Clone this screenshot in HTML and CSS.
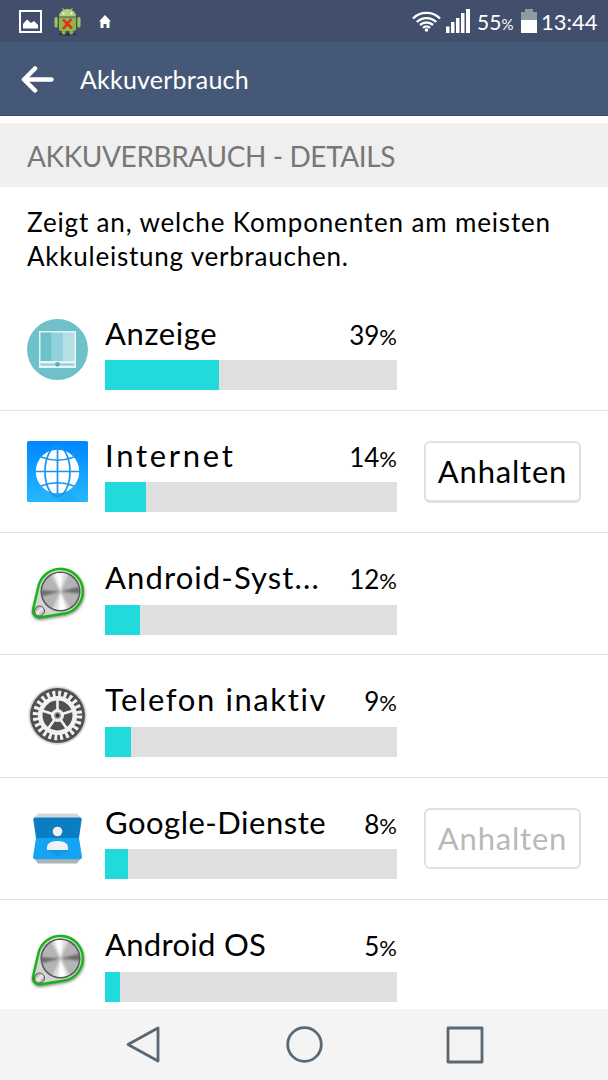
FILE: index.html
```html
<!DOCTYPE html>
<html lang="de">
<head>
  <meta charset="UTF-8" />
  <meta name="viewport" content="width=device-width, initial-scale=1" />
  <title>Akkuverbrauch</title>
  <link rel="stylesheet" href="styles.css">
</head>
<body>
  <!-- Shared shapes -->
  <svg class="defs" width="0" height="0" aria-hidden="true">
    <defs>
      <linearGradient id="sky" x1="0" y1="0" x2="0" y2="1">
        <stop offset="0" stop-color="#0086ff" />
        <stop offset="1" stop-color="#26b8ff" />
      </linearGradient>
      <linearGradient id="metal" x1="0" y1="0" x2="1" y2="1">
        <stop offset="0" stop-color="#777" />
        <stop offset="0.5" stop-color="#eee" />
        <stop offset="1" stop-color="#888" />
      </linearGradient>
      <filter id="soft" x="-30%" y="-30%" width="160%" height="160%">
        <feGaussianBlur stdDeviation="1.6" />
      </filter>
      <filter id="shine" x="-30%" y="-30%" width="160%" height="160%">
        <feGaussianBlur stdDeviation="1.1" />
      </filter>
      <clipPath id="disc"><circle cx="33.5" cy="28.5" r="18.5" /></clipPath>
      <symbol id="knob" viewBox="0 0 61 61">
        <path d="M6 48 L12 25 A22.5 22.5 0 1 1 38 52 L14 56 A7 7 0 0 1 6 48z" fill="#333" stroke="#333" stroke-width="2" opacity="0.6" filter="url(#soft)" />
        <path d="M6.100 46.500 L11.500 23 A22.500 22.500 0 1 1 37.500 50.500 L13.800 54.300 A6.500 6.500 0 0 1 6.100 46.500z" fill="#d4d4d4" stroke="#12b812" stroke-width="2.400" />
        <circle cx="33.5" cy="28.5" r="20" fill="#5a5a5a" />
        <circle cx="33.5" cy="28.5" r="18.500" fill="#b4b4b4" />
        <g clip-path="url(#disc)">
          <g filter="url(#shine)">
            <path d="M33.5 28.5 L22 8 H43z M33.5 28.5 L45 49 H24z" fill="#dcdcdc" />
            <path d="M33.5 28.5 L27 8 H36z M33.5 28.5 L40 49 H31z" fill="#fff" />
            <path d="M33.5 28.5 L12 27 V34z M33.5 28.5 L55 23 V31z" fill="#6c6c6c" />
          </g>
        </g>
        <circle cx="12.500" cy="48" r="5" fill="url(#metal)" stroke="#555" />
      </symbol>
    </defs>
  </svg>

  <div class="phone">
    <div class="status-bar">
      <div class="status-left">
        <svg width="23" height="23" viewBox="0 0 23 23">
          <rect x="1" y="1" width="21" height="21" fill="none" stroke="#fff" stroke-width="2" />
          <path d="M4 18.500 V14 L8 9.500 L12 13 L15 11 L19 15 V18.500z" fill="#fff" />
        </svg>
        <svg width="27" height="29" viewBox="0 0 27 29">
          <ellipse cx="13.500" cy="27.200" rx="9.500" ry="1.500" fill="#29334a" />
          <path d="M8.500 1 L10.500 4 M18.500 1 L16.500 4" stroke="#9ac04c" stroke-width="1.200" />
          <path d="M5 9.500 A8.500 7.500 0 0 1 22 9.500z" fill="#b2cf79" />
          <path d="M5 10.500 H22 V21.500 Q22 24 19.500 24 H7.500 Q5 24 5 21.500z" fill="#8eb844" />
          <rect x="0.500" y="10" width="3.200" height="10.500" rx="1.600" fill="#9cc35b" />
          <rect x="23.300" y="10" width="3.200" height="10.500" rx="1.600" fill="#9cc35b" />
          <rect x="8" y="23" width="3.500" height="4.500" rx="1.500" fill="#8eb844" />
          <rect x="15.500" y="23" width="3.500" height="4.500" rx="1.500" fill="#8eb844" />
          <circle cx="9.500" cy="6.500" r="1" fill="#fff" />
          <circle cx="17.500" cy="6.500" r="1" fill="#fff" />
          <path d="M9 12.500 L18 21.500 M17.500 12 L9 22" stroke="#e22e22" stroke-width="2.600" />
        </svg>
        <svg width="12" height="13" viewBox="0 0 12 13">
          <path d="M6 0 L12 6.500 H10.500 V13 H7.500 V9 H4.500 V13 H1.500 V6.500 H0z" fill="#fff" />
        </svg>
      </div>
      <div class="status-right">
        <svg class="wifi" width="29" height="21" viewBox="0 0 29 21">
          <g fill="none" stroke="#fff" stroke-width="2.400">
            <path d="M1 7.500 A19 19 0 0 1 28 7.500" />
            <path d="M4.800 11 A14 14 0 0 1 24.200 11" />
            <path d="M8 14 A9.500 9.500 0 0 1 21 14" />
            <path d="M11 17 A5 5 0 0 1 18 17" />
          </g>
          <circle cx="14.500" cy="19" r="1.800" fill="#fff" />
        </svg>
        <svg class="signal" width="24" height="24" viewBox="0 0 24 24" fill="#fff">
          <rect x="0" y="17.500" width="3.500" height="6.500" />
          <rect x="5" y="13" width="3.500" height="11" />
          <rect x="10" y="9" width="3.500" height="15" />
          <rect x="15" y="4" width="3.500" height="20" />
          <rect x="20" y="0" width="4" height="24" />
        </svg>
        <span class="charge">55<i>%</i></span>
        <svg class="battery" width="16" height="24" viewBox="0 0 16 24">
          <path d="M4 0 H12 V3 H16 V11 H0 V3 H4z" fill="#8d9ba3" />
          <rect y="11" width="16" height="13" fill="#fff" />
        </svg>
        <span class="clock">13:44</span>
      </div>
    </div>

    <header class="title-bar">
      <svg width="33" height="27" viewBox="0 0 33 27">
        <path d="M14 2.500 L3 13.500 L14 24.500 M3 13.500 H30.500" fill="none" stroke="#fff" stroke-width="4.500" stroke-linecap="round" stroke-linejoin="round" />
      </svg>
      <h1>Akkuverbrauch</h1>
    </header>

    <h2 class="section"><span>AKKUVERBRAUCH - DETAILS</span></h2>

    <main>
      <p class="intro">
        <span class="line-one">Zeigt an, welche Komponenten am meisten</span><br>
        <span class="line-two">Akkuleistung verbrauchen.</span>
      </p>

      <ul class="usage">
        <li>
          <svg class="icon" viewBox="0 0 61 61">
            <circle cx="30.500" cy="30.500" r="30.500" fill="#6ec1c8" />
            <rect x="12" y="12" width="37" height="37" fill="#e4f5f7" />
            <rect x="13.500" y="13.500" width="11.300" height="28.500" fill="#6dc2c9" />
            <rect x="24.800" y="13.500" width="11.200" height="28.500" fill="#92d1dc" />
            <rect x="36" y="13.500" width="11.500" height="28.500" fill="#b4e0e4" />
            <path d="M13.500 45.500 H47.500" stroke="#8acdd3" stroke-width="2" />
            <circle cx="30.500" cy="45.300" r="2.400" fill="#54aeb6" />
          </svg>
          <div class="info">
            <div class="label"><span class="name anzeige">Anzeige</span><span class="percent">39<i>%</i></span></div>
            <div class="bar"><div class="fill" style="width: 39%"></div></div>
          </div>
        </li>
        <li>
          <svg class="icon" viewBox="0 0 61 61">
            <rect width="61" height="61" rx="1.500" fill="url(#sky)" />
            <path d="M21 48 L42 48 L52 61 H34z" fill="#1ba3f2" opacity="0.5" />
            <circle cx="30.500" cy="30.500" r="21.800" fill="#fff" />
            <g fill="none" stroke="#1595f5" stroke-width="1.700">
              <path d="M30.500 8 V53 M8 30.500 H53" />
              <ellipse cx="30.500" cy="30.500" rx="12.500" ry="25" />
              <path d="M14 16 Q30.500 22.500 47 16 M14 45 Q30.500 38.500 47 45" />
            </g>
          </svg>
          <div class="info">
            <div class="label"><span class="name internet">Internet</span><span class="percent">14<i>%</i></span></div>
            <div class="bar"><div class="fill" style="width: 14%"></div></div>
          </div>
          <button class="stop">Anhalten</button>
        </li>
        <li>
          <svg class="icon"><use href="#knob" /></svg>
          <div class="info">
            <div class="label"><span class="name system">Android-Syst...</span><span class="percent">12<i>%</i></span></div>
            <div class="bar"><div class="fill" style="width: 12%"></div></div>
          </div>
        </li>
        <li>
          <svg class="icon" viewBox="0 0 61 61">
            <circle cx="30.500" cy="30.500" r="29.300" fill="#d9d9d9" />
            <circle cx="30.500" cy="30.500" r="27.500" fill="#505050" />
            <circle cx="30.500" cy="30.500" r="21.500" fill="none" stroke="#f1f1f1" stroke-width="6.500" stroke-dasharray="2.900 2.729" />
            <circle cx="30.500" cy="30.500" r="17.300" fill="none" stroke="#f1f1f1" stroke-width="4.600" />
            <path d="M30.500 30.500 V14 M30.500 30.500 L14.800 25.400 M30.500 30.500 L46.200 25.400 M30.500 30.500 L20.800 43.900 M30.500 30.500 L40.200 43.900" stroke="#f1f1f1" stroke-width="2.600" />
            <circle cx="30.500" cy="30.500" r="6.500" fill="#f1f1f1" />
            <circle cx="30.500" cy="30.500" r="3.500" fill="#999" />
            <circle cx="30.500" cy="30.500" r="2" fill="#333" />
          </svg>
          <div class="info">
            <div class="label"><span class="name telefon">Telefon inaktiv</span><span class="percent">9<i>%</i></span></div>
            <div class="bar"><div class="fill" style="width: 9%"></div></div>
          </div>
        </li>
        <li>
          <svg class="icon" viewBox="0 0 61 61">
            <path d="M11 5.500 H50 L54 10 H7z" fill="#d6d8d8" />
            <path d="M7 50 H54 L50 55.500 H11z" fill="#aeb4b5" />
            <path d="M8 9.500 H53 Q55 9.500 54.700 11.500 L52 30 H9 L6.300 11.500 Q6 9.500 8 9.500z" fill="#0b7dc2" />
            <path d="M9 30 H52 L55 49 Q55 51.300 53 51.300 H8 Q6 51.300 6 49z" fill="#15a3f3" />
            <path d="M20 42 H41 L32 49z" fill="#0f91dc" opacity="0.6" />
            <circle cx="30.500" cy="23.500" r="4.800" fill="#f1f1f1" />
            <path d="M20 42 V39.500 C20 35 25 33 30.500 33 S41 35 41 39.500 V42z" fill="#f1f1f1" />
          </svg>
          <div class="info">
            <div class="label"><span class="name google">Google-Dienste</span><span class="percent">8<i>%</i></span></div>
            <div class="bar"><div class="fill" style="width: 8%"></div></div>
          </div>
          <button class="stop" disabled>Anhalten</button>
        </li>
        <li>
          <svg class="icon"><use href="#knob" /></svg>
          <div class="info">
            <div class="label"><span class="name os">Android OS</span><span class="percent">5<i>%</i></span></div>
            <div class="bar"><div class="fill" style="width: 5%"></div></div>
          </div>
        </li>
      </ul>
    </main>

    <nav class="nav-bar">
      <svg width="38" height="38" viewBox="0 0 38 38"><path d="M33 2 V35 L3 18.500z" /></svg>
      <svg width="38" height="38" viewBox="0 0 38 38"><circle cx="18.500" cy="18.500" r="16.800" /></svg>
      <svg width="38" height="38" viewBox="0 0 38 38"><rect x="2" y="2" width="34" height="34" /></svg>
    </nav>
  </div>
</body>
</html>
```

FILE: styles.css
```css
* {
  box-sizing: border-box;
  margin: 0;
  padding: 0;
}
body {
  font-family: Lato, "Open Sans", sans-serif;
  color: #000;
  background: #fff;
}
svg {
  display: block;
  flex: none;
}
i {
  font-style: normal;
}
.defs {
  position: absolute;
}
.phone {
  display: flex;
  flex-direction: column;
  height: 1080px;
  overflow: hidden;
}

/* Status bar */
.status-bar {
  flex: none;
  display: flex;
  justify-content: space-between;
  height: 42px;
  padding: 0 12px 0 19px;
  background: #414e6c;
  color: #fff;
}
.status-left,
.status-right {
  display: flex;
  align-items: center;
}
.status-left {
  gap: 12px;
}
.status-left svg:last-child {
  margin-left: 6px;
}
.wifi {
  margin-right: 5px;
}
.signal {
  margin-right: 7px;
}
.charge {
  width: 36px;
  margin-right: 8px;
  font-size: 21px;
  white-space: nowrap;
}
.charge i {
  font-size: 15px;
}
.clock {
  width: 55px;
  margin-left: 4px;
  font-size: 22px;
}

/* Title bar */
.title-bar {
  flex: none;
  display: flex;
  align-items: center;
  gap: 26px;
  height: 74px;
  padding: 1px 0 0 21px;
  background: #465877;
  border-bottom: 1px solid #37486a;
  color: #fff;
}
.title-bar h1 {
  font-size: 25px;
  font-weight: 400;
  letter-spacing: 0.2px;
}

.section {
  flex: none;
  display: flex;
  align-items: center;
  height: 64px;
  margin-top: 7px;
  padding: 1px 27px 0;
  background: #efefef;
  color: #777;
  font-size: 28px;
  font-weight: 400;
  letter-spacing: -0.4px;
}

/* Usage list */
main {
  flex: 1;
  min-height: 0;
  overflow: hidden;
}
.intro {
  height: 101.5px;
  padding: 18px 27px 0;
  font-size: 26px;
  line-height: 34px;
  white-space: nowrap;
}
.line-one {
  letter-spacing: 0.85px;
}
.line-two {
  letter-spacing: 0.77px;
}
.usage {
  list-style: none;
}
.usage li {
  display: flex;
  height: 122.3px;
  padding: 30px 27px 0;
  border-bottom: 1px solid #e4e4e4;
}
.icon {
  width: 61px;
  height: 61px;
  margin-right: 17px;
}
.info {
  flex: none;
  width: 292px;
  margin-right: 27px;
}
.label {
  display: flex;
  justify-content: space-between;
  align-items: baseline;
  height: 41.6px;
  line-height: 28px;
  white-space: nowrap;
}
.name {
  font-size: 31px;
}
.anzeige {
  letter-spacing: 0.6px;
}
.internet {
  letter-spacing: 2.7px;
}
.system {
  letter-spacing: 1.1px;
}
.telefon {
  letter-spacing: 1.6px;
}
.google {
  letter-spacing: 0.5px;
}
.os {
  letter-spacing: 0.3px;
}
.percent {
  font-size: 26px;
}
.percent i {
  font-size: 22px;
}
.bar {
  height: 30px;
  background: #dfdfdf;
}
.fill {
  height: 100%;
  background: #20dadc;
}
.stop {
  flex: none;
  width: 157px;
  height: 62px;
  background: #fff;
  border: 2px solid #dfe1e1;
  border-bottom-width: 3px;
  border-radius: 6px;
  color: #000;
  font: 31px Lato, "Open Sans", sans-serif;
  letter-spacing: 0.8px;
}
.stop:disabled {
  height: 61px;
  border-bottom-width: 2px;
  color: #b8baba;
}

/* Navigation keys */
.nav-bar {
  flex: none;
  display: flex;
  justify-content: space-between;
  align-items: center;
  height: 71px;
  padding: 0 124px 0 125px;
  background: #f4f4f4;
}
.nav-bar svg {
  fill: none;
  stroke: #596873;
  stroke-width: 2.8;
  stroke-linejoin: round;
}
```
